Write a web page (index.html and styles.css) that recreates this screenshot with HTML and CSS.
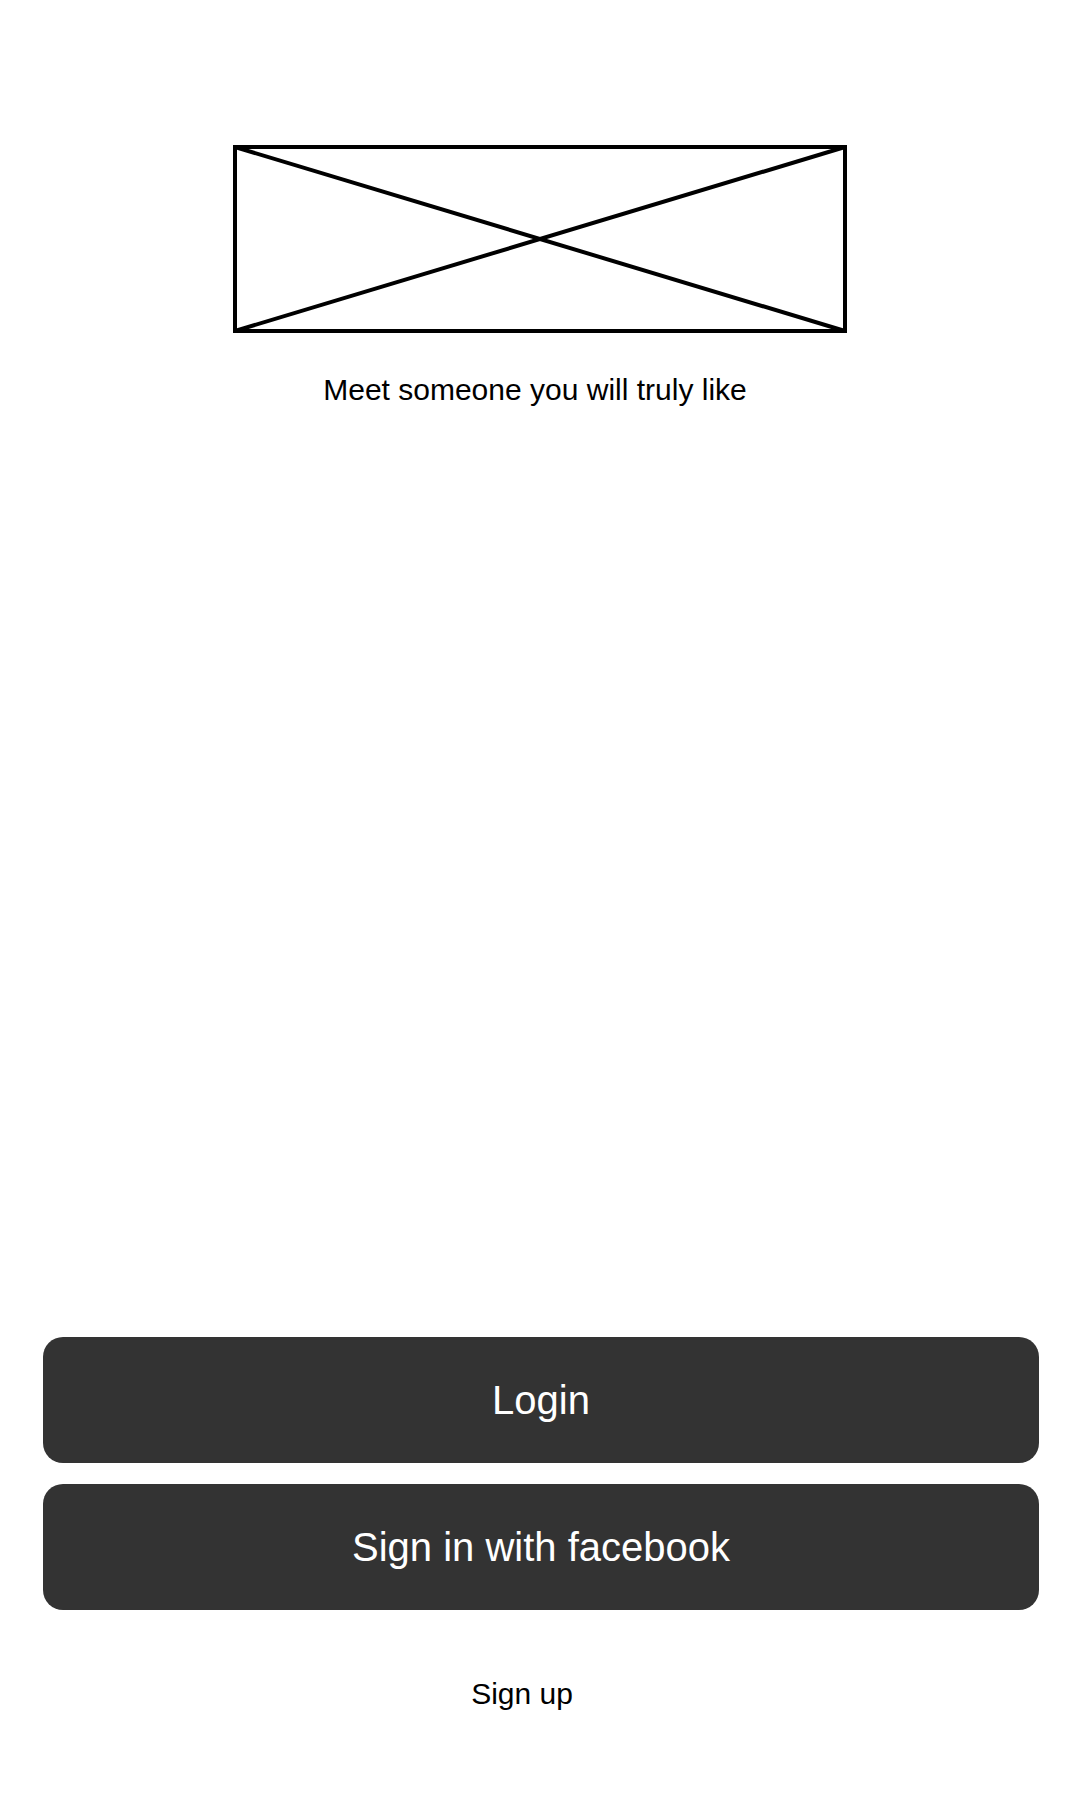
FILE: index.html
```html
<!DOCTYPE html>
<html lang="en">
<head>
<meta charset="utf-8">
<title>Welcome</title>
<link rel="stylesheet" href="styles.css">
</head>
<body>
<main class="screen">
  <header class="hero">
    <svg class="logo" width="614" height="188" viewBox="0 0 614 188" aria-label="Logo placeholder">
      <rect x="2" y="2" width="610" height="184" fill="none" stroke="#000" stroke-width="4"/>
      <line x1="2" y1="2" x2="612" y2="186" stroke="#000" stroke-width="4"/>
      <line x1="2" y1="186" x2="612" y2="2" stroke="#000" stroke-width="4"/>
    </svg>
    <p class="tagline">Meet someone you will truly like</p>
  </header>
  <section class="actions">
    <button class="btn">Login</button>
    <button class="btn">Sign in with facebook</button>
    <a class="signup">Sign up</a>
  </section>
</main>
</body>
</html>
```

FILE: styles.css
```css
html, body {
  margin: 0;
  padding: 0;
  background: #fff;
}
body {
  font-family: "Liberation Sans", Arial, sans-serif;
  color: #000;
}
.screen {
  min-height: 1800px;
  display: flex;
  flex-direction: column;
}
.hero {
  display: flex;
  flex-direction: column;
  align-items: center;
  padding-top: 145px;
}
.logo {
  display: block;
}
.tagline {
  margin: 39px 0 0;
  font-size: 30px;
  line-height: 36px;
  padding-right: 10px;
}
.actions {
  margin-top: auto;
  display: flex;
  flex-direction: column;
  gap: 21px;
  padding: 0 41px 88px 43px;
}
.btn {
  height: 126px;
  border: none;
  border-radius: 20px;
  background: #333333;
  color: #fff;
  font-family: "Liberation Sans", Arial, sans-serif;
  font-size: 40px;
  padding: 0;
}
.signup {
  margin-top: 45px;
  align-self: center;
  font-size: 30px;
  line-height: 36px;
  color: #000;
  margin-right: 38px;
}
```
